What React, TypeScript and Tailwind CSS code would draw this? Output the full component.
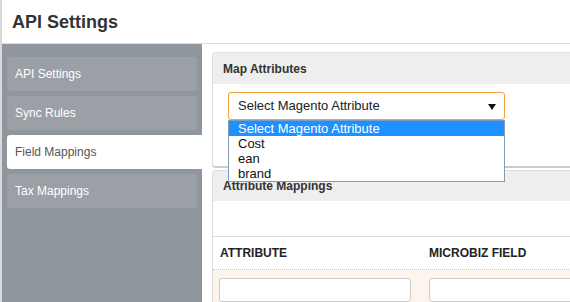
import React from 'react';

const NAV = [
  { label: 'API Settings', active: false },
  { label: 'Sync Rules', active: false },
  { label: 'Field Mappings', active: true },
  { label: 'Tax Mappings', active: false },
];

const OPTIONS = ['Select Magento Attribute', 'Cost', 'ean', 'brand'];

export default function App() {
  return (
    <div
      className="w-[570px] h-[302px] overflow-hidden bg-white flex flex-col border-l-2 border-[#d9d9d9] text-[#333]"
      style={{ fontFamily: '"Liberation Sans", Arial, sans-serif' }}
    >
      {/* Page header */}
      <div className="h-[44px] flex-none border-b border-[#dddddd] pl-[10px] pt-[12px]">
        <h1 className="text-[18px] leading-[20px] font-bold text-[#333]">API Settings</h1>
      </div>

      <div className="flex flex-1 min-h-0">
        {/* Sidebar */}
        <div className="w-[200px] flex-none bg-[#8f969e] pt-[13px] pl-[5px] flex flex-col gap-[5px]">
          {NAV.map(item => (
            <div
              key={item.label}
              className={
                item.active
                  ? 'h-[34px] w-[195px] bg-white rounded-l-[3px] pl-[8px] flex items-center text-[12px] text-[#555]'
                  : 'h-[34px] w-[190px] bg-[#9ba0a7] rounded-[3px] pl-[8px] flex items-center text-[12px] text-white'
              }
            >
              {item.label}
            </div>
          ))}
        </div>

        {/* Content */}
        <div className="w-[420px] flex-none pl-[10px] pt-[8px]">
          {/* Map Attributes panel */}
          <div className="relative z-10 h-[116px] border border-[#dddddd] border-b-2 border-b-[#cccccc] rounded-[4px]">
            <div className="h-[31px] bg-[#eeeeee] rounded-t-[4px] px-[10px] flex items-center text-[12px] font-bold text-[#333]">
              Map Attributes
            </div>
            <div className="pl-[15px] pt-[8px]">
              <div className="relative w-[277px] h-[28px] border border-[#f0a33a] rounded-[3px] pl-[9px] flex items-center text-[13px] text-[#222]">
                Select Magento Attribute
                <svg className="absolute right-[8px] top-[11px]" width="8" height="6" viewBox="0 0 8 6">
                  <path d="M0 0 L8 0 L4 6 Z" fill="#111" />
                </svg>
                <div className="absolute left-[-1px] top-[27px] w-[277px] border border-[#7f9db9] bg-white">
                  {OPTIONS.map((opt, i) => (
                    <div
                      key={opt}
                      className={
                        i === 0
                          ? 'h-[15px] leading-[15px] pl-[9px] text-[13px] bg-[#1e90ff] text-white'
                          : 'h-[15px] leading-[15px] pl-[9px] text-[13px] text-[#111]'
                      }
                    >
                      {opt}
                    </div>
                  ))}
                </div>
              </div>
            </div>
          </div>

          {/* Attribute Mappings panel */}
          <div className="mt-[2px] border border-[#dddddd] border-b-0 rounded-t-[4px]">
            <div className="h-[30px] bg-[#eeeeee] rounded-t-[4px] px-[10px] flex items-center text-[12px] font-bold text-[#333]">
              Attribute Mappings
            </div>
            <div className="h-[35px] bg-white" />
            <div className="border-t border-[#dddddd]">
              <div className="flex h-[33px] items-center border-b border-dotted border-[#c8c8c8] text-[12px] font-bold text-[#222]">
                <div className="w-[208px] pl-[7px]">ATTRIBUTE</div>
                <div className="flex-1 pl-[8px]">MICROBIZ FIELD</div>
              </div>
              <div className="flex bg-[#fdf5ec] pt-[8px] pb-[8px]">
                <div className="w-[208px] pl-[6px]">
                  <div className="w-[192px] h-[24px] bg-white border border-[#cccccc] rounded-[3px]" />
                </div>
                <div className="flex-1 pl-[8px]">
                  <div className="w-[192px] h-[24px] bg-white border border-[#cccccc] rounded-[3px]" />
                </div>
              </div>
            </div>
          </div>
        </div>
      </div>
    </div>
  );
}
